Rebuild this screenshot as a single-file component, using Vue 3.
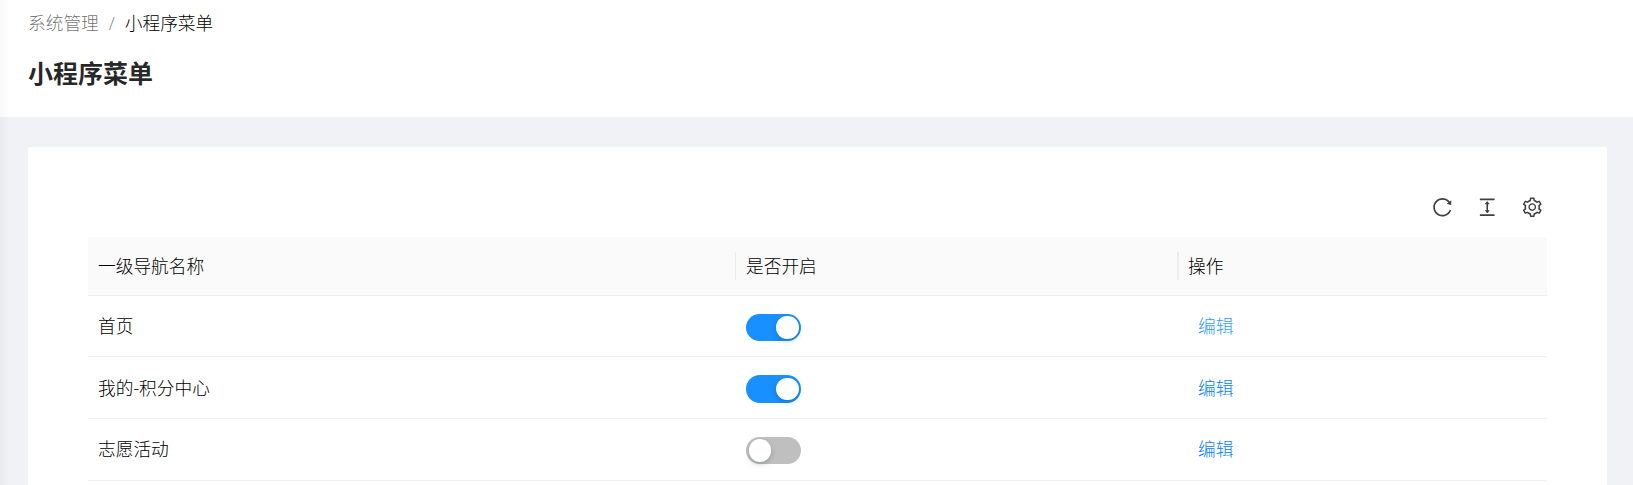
<script setup>
const rows = [
  { name: '首页', enabled: true, hovered: true },
  { name: '我的-积分中心', enabled: true, hovered: false },
  { name: '志愿活动', enabled: false, hovered: false },
]
</script>

<template>
  <div class="page">
    <header class="page-header">
      <nav class="breadcrumb">
        <span class="parent">系统管理</span>
        <span class="slash">/</span>
        <span>小程序菜单</span>
      </nav>
      <h1>小程序菜单</h1>
    </header>
    <main class="card">
      <div class="toolbar">
        <svg viewBox="0 0 1024 1024"><path d="M909.1 209.3l-56.4 44.1C775.8 155.1 656.2 92 521.9 92 290 92 102.3 279.5 102 511.5 101.7 743.7 289.8 932 521.9 932c181.3 0 335.8-115 394.6-276.1 1.5-4.2-.7-8.9-4.9-10.3l-56.7-19.5a8 8 0 00-10.1 4.8c-1.8 5-3.8 10-5.9 14.9-17.3 41-42.1 77.8-73.7 109.4A344.77 344.77 0 01655.9 829c-42.3 17.9-87.4 27-133.8 27-46.5 0-91.5-9.1-133.8-27A341.5 341.5 0 01279 755.2a342.16 342.16 0 01-73.7-109.4c-17.9-42.4-27-87.4-27-133.9s9.1-91.5 27-133.9c17.3-41 42.1-77.8 73.7-109.4 31.6-31.6 68.4-56.4 109.3-73.8 42.3-17.9 87.4-27 133.8-27 46.5 0 91.5 9.1 133.8 27a341.5 341.5 0 01109.3 73.8c9.9 9.9 19.2 20.4 27.8 31.4l-60.2 47a8 8 0 003 14.1l175.6 43c5 1.2 9.9-2.6 9.9-7.7l.8-180.9c-.1-6.6-7.8-10.3-13-6.2z" /></svg>
        <svg viewBox="0 0 1024 1024"><path d="M840 836H184c-4.4 0-8 3.6-8 8v60c0 4.4 3.6 8 8 8h656c4.4 0 8-3.6 8-8v-60c0-4.4-3.6-8-8-8zm0-724H184c-4.4 0-8 3.6-8 8v60c0 4.4 3.6 8 8 8h656c4.4 0 8-3.6 8-8v-60c0-4.4-3.6-8-8-8zM610.8 378c6 0 9.4-7 5.7-11.7L515.7 238.7a7.14 7.14 0 00-11.3 0L403.6 366.3a7.23 7.23 0 005.7 11.7H476v268h-62.8c-6 0-9.4 7-5.7 11.7l100.8 127.5c2.9 3.7 8.5 3.7 11.3 0l100.8-127.5c3.7-4.7.4-11.7-5.7-11.7H548V378h62.8z" /></svg>
        <svg viewBox="0 0 1024 1024"><path d="M924.8 625.7l-65.5-56c3.1-19 4.7-38.4 4.7-57.8s-1.6-38.8-4.7-57.8l65.5-56a32.03 32.03 0 009.3-35.2l-.9-2.6a443.74 443.74 0 00-79.7-137.9l-1.8-2.1a32.12 32.12 0 00-35.1-9.5l-81.3 28.9c-30-24.6-63.5-44-99.7-57.6l-15.7-85a32.05 32.05 0 00-25.8-25.7l-2.7-.5c-52.1-9.4-106.9-9.4-159 0l-2.7.5a32.05 32.05 0 00-25.8 25.7l-15.8 85.4a351.86 351.86 0 00-99 57.4l-81.9-29.1a32 32 0 00-35.1 9.5l-1.8 2.1a446.02 446.02 0 00-79.7 137.9l-.9 2.6c-4.5 12.5-.8 26.5 9.3 35.2l66.3 56.6c-3.1 18.8-4.6 38-4.6 57.1 0 19.2 1.5 38.4 4.6 57.1L99 625.5a32.03 32.03 0 00-9.3 35.2l.9 2.6c18.1 50.4 44.9 96.9 79.7 137.9l1.8 2.1a32.12 32.12 0 0035.1 9.5l81.9-29.1c29.8 24.5 63.1 43.9 99 57.4l15.8 85.4a32.05 32.05 0 0025.8 25.7l2.7.5a449.4 449.4 0 00159 0l2.7-.5a32.05 32.05 0 0025.8-25.7l15.7-85a350 350 0 0099.7-57.6l81.3 28.9a32 32 0 0035.1-9.5l1.8-2.1c34.8-41.1 61.6-87.5 79.7-137.9l.9-2.6c4.5-12.3.8-26.3-9.3-35zM788.3 465.9c2.5 15.1 3.8 30.6 3.8 46.1s-1.3 31-3.8 46.1l-6.6 40.1 74.7 63.9a370.03 370.03 0 01-42.6 73.6L721 702.8l-31.4 25.8c-23.9 19.6-50.5 35-79.3 45.8l-38.1 14.3-17.9 97a377.5 377.5 0 01-85 0l-17.9-97.2-37.8-14.5c-28.5-10.8-55-26.2-78.7-45.7l-31.4-25.9-93.4 33.2c-17-22.9-31.2-47.6-42.6-73.6l75.5-64.5-6.5-40c-2.4-14.9-3.7-30.3-3.7-45.5 0-15.3 1.2-30.6 3.7-45.5l6.5-40-75.5-64.5c11.3-26.1 25.6-50.7 42.6-73.6l93.4 33.2 31.4-25.9c23.7-19.5 50.2-34.9 78.7-45.7l37.9-14.3 17.9-97.2c28.1-3.2 56.8-3.2 85 0l17.9 97 38.1 14.3c28.7 10.8 55.4 26.2 79.3 45.8l31.4 25.8 92.8-32.9c17 22.9 31.2 47.6 42.6 73.6L781.8 426l6.5 39.9zM512 326c-97.2 0-176 78.8-176 176s78.8 176 176 176 176-78.8 176-176-78.8-176-176-176zm79.2 255.2A111.6 111.6 0 01512 614c-29.9 0-58-11.7-79.2-32.8A111.6 111.6 0 01400 502c0-29.9 11.7-58 32.8-79.2C454 401.6 482.1 390 512 390c29.9 0 58 11.6 79.2 32.8A111.6 111.6 0 01624 502c0 29.9-11.7 58-32.8 79.2z" /></svg>
      </div>
      <div class="row head">
        <div class="cell">一级导航名称</div>
        <div class="cell">是否开启</div>
        <div class="cell">操作</div>
      </div>
      <div v-for="row in rows" :key="row.name" class="row">
        <div class="cell">{{ row.name }}</div>
        <div class="cell control">
          <span class="switch" :class="{ on: row.enabled }"><i class="knob"></i></span>
        </div>
        <div class="cell"><a class="edit" :class="{ hovered: row.hovered }">编辑</a></div>
      </div>
    </main>
    <div class="edge-shadow"></div>
  </div>
</template>

<style>
body {
  overflow: hidden;
}
</style>

<style scoped>
.page {
  position: relative;
  box-sizing: border-box;
  height: 485px;
  overflow: hidden;
  background: #f0f2f5;
  color: #000;
  font-family: "Open Sans", "Noto Sans CJK SC", sans-serif;
  font-weight: 300;
  font-size: 17.7px;
  line-height: 27.5px;
}
.page-header {
  box-sizing: border-box;
  height: 117px;
  padding: 10px 28px 0;
  background: #fff;
}
.breadcrumb {
  display: flex;
}
.parent,
.slash {
  color: rgba(0, 0, 0, 0.58);
}
.slash {
  width: 26px;
  text-align: center;
}
h1 {
  margin: 15px 0 0;
  color: rgba(0, 0, 0, 0.85);
  font-size: 25px;
  font-weight: 700;
  line-height: 40px;
}
.card {
  box-sizing: border-box;
  height: 400px;
  margin: 30px 26px 0 28px;
  padding: 30px 60px 0;
  border-radius: 2px;
  background: #fff;
}
.toolbar {
  display: flex;
  align-items: center;
  justify-content: flex-end;
  gap: 22.5px;
  height: 60px;
  padding-right: 4px;
}
.toolbar svg {
  width: 22.5px;
  height: 22.5px;
  fill: rgba(0, 0, 0, 0.75);
}
.row {
  display: grid;
  grid-template-columns: 648px 442px 1fr;
  box-sizing: border-box;
  height: 62px;
  border-bottom: 1px solid #f0f0f0;
}
.head {
  height: 59px;
  border-radius: 2px 2px 0 0;
  background: #fafafa;
}
.head + .row {
  height: 61px;
}
.cell {
  display: flex;
  align-items: center;
  padding: 2px 10px 0;
}
.control {
  padding-top: 3px;
}
.row:last-child .cell:not(.control) {
  padding-top: 0;
}
.row:last-child .control {
  padding-top: 2px;
}
.head .cell + .cell {
  margin-left: -1px;
  padding-left: 11px;
  background: linear-gradient(#ebebeb, #ebebeb) 0 15px / 1px 28px no-repeat;
}
.head .cell:last-child {
  background-size: 2px 28px;
}
.switch {
  box-sizing: border-box;
  width: 55px;
  height: 27.5px;
  padding: 2.5px;
  border-radius: 14px;
  background: #bfbfbf;
}
.switch.on {
  background: #1890ff;
}
.knob {
  display: block;
  width: 22.5px;
  height: 22.5px;
  border-radius: 50%;
  background: #fff;
  box-shadow: 0 2.5px 5px rgba(0, 35, 11, 0.2);
}
.on .knob {
  margin-left: auto;
}
.edit {
  margin-left: 10px;
  color: #0680fa;
}
.edit.hovered {
  color: #309bff;
}
.edge-shadow {
  position: absolute;
  inset: 0 auto 0 0;
  width: 10px;
  background: linear-gradient(90deg, rgba(0, 21, 41, 0.03), rgba(0, 21, 41, 0));
}
</style>
